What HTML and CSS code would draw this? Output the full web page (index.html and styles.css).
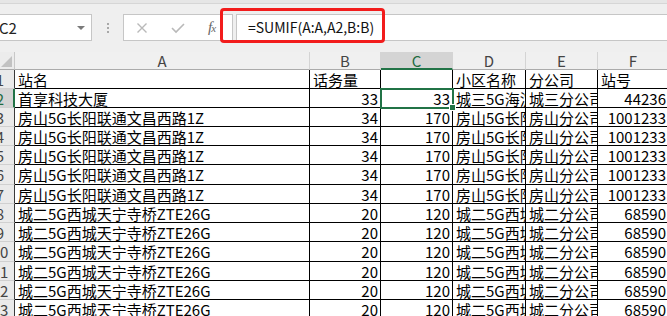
FILE: index.html
```html
<!DOCTYPE html>
<html lang="zh">
<head>
<meta charset="utf-8">
<title>Excel SUMIF</title>
<link rel="stylesheet" href="styles.css">
</head>
<body>
<div class="bar">
  <div class="band"></div>
  <div class="frow">
    <div class="namebox"><span>C2</span><i class="caret"></i></div>
    <div class="dots"><i></i><i></i><i></i></div>
    <div class="btns">
      <svg class="ic-x" width="12" height="12" viewBox="0 0 12 12"><path d="M1.5 1.5L10.5 10.5M10.5 1.5L1.5 10.5" stroke="#b9b9b9" stroke-width="1.4" fill="none"/></svg>
      <svg class="ic-ok" width="14" height="12" viewBox="0 0 14 12"><path d="M1 6L5 10L13 2" stroke="#b9b9b9" stroke-width="1.6" fill="none"/></svg>
      <span class="fx">f<span class="fxx">x</span></span>
    </div>
    <div class="fbox">=SUMIF(A:A,A2,B:B)</div>
  </div>
  <div class="redbox"></div>
</div>
<div class="sheet">
  <div class="corner"><svg width="11" height="11" viewBox="0 0 11 11"><path d="M11 0V11H0Z" fill="#c2c2c2"/></svg></div>
  <div class="ch">A</div><div class="ch">B</div><div class="ch sel">C</div><div class="ch">D</div><div class="ch">E</div><div class="ch">F</div>

  <div class="rh"><span>1</span></div><div class="c">站名</div><div class="c">话务量</div><div class="c"></div><div class="c">小区名称</div><div class="c">分公司</div><div class="c">站号</div>
  <div class="rh sel"><span>2</span></div><div class="c">首享科技大厦</div><div class="c n">33</div><div class="c n">33</div><div class="c">城三5G海淀首享科技大厦</div><div class="c">城三分公司</div><div class="c n">44236</div>
  <div class="rh"><span>3</span></div><div class="c">房山5G长阳联通文昌西路1Z</div><div class="c n">34</div><div class="c n">170</div><div class="c">房山5G长阳联通文昌西路1Z</div><div class="c">房山分公司</div><div class="c n">1001233</div>
  <div class="rh"><span>4</span></div><div class="c">房山5G长阳联通文昌西路1Z</div><div class="c n">34</div><div class="c n">170</div><div class="c">房山5G长阳联通文昌西路1Z</div><div class="c">房山分公司</div><div class="c n">1001233</div>
  <div class="rh"><span>5</span></div><div class="c">房山5G长阳联通文昌西路1Z</div><div class="c n">34</div><div class="c n">170</div><div class="c">房山5G长阳联通文昌西路1Z</div><div class="c">房山分公司</div><div class="c n">1001233</div>
  <div class="rh"><span>6</span></div><div class="c">房山5G长阳联通文昌西路1Z</div><div class="c n">34</div><div class="c n">170</div><div class="c">房山5G长阳联通文昌西路1Z</div><div class="c">房山分公司</div><div class="c n">1001233</div>
  <div class="rh"><span>7</span></div><div class="c">房山5G长阳联通文昌西路1Z</div><div class="c n">34</div><div class="c n">170</div><div class="c">房山5G长阳联通文昌西路1Z</div><div class="c">房山分公司</div><div class="c n">1001233</div>
  <div class="rh"><span>8</span></div><div class="c">城二5G西城天宁寺桥ZTE26G</div><div class="c n">20</div><div class="c n">120</div><div class="c">城二5G西城天宁寺桥ZTE26G</div><div class="c">城二分公司</div><div class="c n">68590</div>
  <div class="rh"><span>9</span></div><div class="c">城二5G西城天宁寺桥ZTE26G</div><div class="c n">20</div><div class="c n">120</div><div class="c">城二5G西城天宁寺桥ZTE26G</div><div class="c">城二分公司</div><div class="c n">68590</div>
  <div class="rh"><span>10</span></div><div class="c">城二5G西城天宁寺桥ZTE26G</div><div class="c n">20</div><div class="c n">120</div><div class="c">城二5G西城天宁寺桥ZTE26G</div><div class="c">城二分公司</div><div class="c n">68590</div>
  <div class="rh"><span>11</span></div><div class="c">城二5G西城天宁寺桥ZTE26G</div><div class="c n">20</div><div class="c n">120</div><div class="c">城二5G西城天宁寺桥ZTE26G</div><div class="c">城二分公司</div><div class="c n">68590</div>
  <div class="rh"><span>12</span></div><div class="c">城二5G西城天宁寺桥ZTE26G</div><div class="c n">20</div><div class="c n">120</div><div class="c">城二5G西城天宁寺桥ZTE26G</div><div class="c">城二分公司</div><div class="c n">68590</div>
  <div class="rh"><span>13</span></div><div class="c">城二5G西城天宁寺桥ZTE26G</div><div class="c n">20</div><div class="c n">120</div><div class="c">城二5G西城天宁寺桥ZTE26G</div><div class="c">城二分公司</div><div class="c n">68590</div>

  <div class="selbox"><i class="handle"></i></div>
</div>
</body>
</html>
```

FILE: styles.css
```css
* { box-sizing: border-box; margin: 0; padding: 0; }
html, body { width: 667px; height: 316px; overflow: hidden; }
body {
  background: #efefef;
  font-family: "Noto Sans CJK SC", "Noto Sans", sans-serif;
  color: #000;
}

.bar { position: relative; height: 52px; }
.band { height: 4px; background: #e6e6e6; border-bottom: 1px solid #d6d6d6; }
.frow { display: flex; height: 27px; margin-top: 10px; }

.namebox {
  width: 100px; margin-left: -8px;
  background: #fff; border: 1px solid #c6c6c6;
  display: flex; align-items: center; justify-content: space-between;
  padding: 0 6px 0 6px;
  font-size: 15px; color: #222;
}
.caret {
  display: block; width: 0; height: 0;
  border-left: 4px solid transparent; border-right: 4px solid transparent;
  border-top: 4px solid #7a7a7a;
}
.dots { width: 31px; display: flex; flex-direction: column; align-items: center; justify-content: center; gap: 2px; }
.dots i { display: block; width: 2px; height: 2px; background: #a8a8a8; }

.btns {
  width: 110px; background: #fff; border: 1px solid #c6c6c6;
  display: flex; align-items: center; gap: 23px; padding-left: 12px;
}
.fx {
  font-family: "Liberation Serif", serif; font-style: italic;
  font-size: 15px; color: #666; letter-spacing: -1px;
}
.fxx { font-size: 11px; }

.fbox {
  flex: 1; margin-left: 3px; margin-right: -20px;
  background: #fff; border: 1px solid #c6c6c6;
  padding-left: 11px; font-size: 14px; line-height: 25px; color: #111;
}
.redbox {
  position: absolute; left: 220px; top: 8px; width: 165px; height: 35px;
  border: 3px solid #f21c1c; border-radius: 4px;
}

.sheet {
  position: relative;
  display: grid;
  grid-template-columns: 15px 295px 71px 72px 73px 72px 71px;
  grid-template-rows: 18px 19px 19px 19px 19px 19px 20px 19px 19px 19px 20px 19px 19px 19px;
  font-size: 15px;
}
.corner {
  background: #ececec; border-right: 1px solid #c8c8c8; border-bottom: 1px solid #ababab;
  display: flex; align-items: flex-end; justify-content: flex-end; padding: 0 2px 2px 0;
}
.ch {
  background: #f0f0f0; color: #444;
  border-right: 1px solid #d4d4d4; border-bottom: 1px solid #ababab;
  text-align: center; line-height: 17px;
}
.ch.sel { background: #d4d4d4; color: #1e6b3f; border-bottom: 2px solid #217346; }

.rh {
  background: #eaeaea; color: #444; overflow: hidden;
  border-right: 1px solid #3a3a3a; border-bottom: 1px solid #d0d0d0;
  line-height: 18px; padding-top: 1px;
}
.rh span { display: block; width: 30px; margin-left: -15px; text-align: center; }
.rh.sel { background: #d4d4d4; color: #1e6b3f; border-right: 2px solid #217346; }

.c {
  background: #fff; white-space: nowrap; overflow: hidden;
  border-right: 1px solid #000; border-bottom: 1px solid #000;
  padding: 1px 2px 0 3px; line-height: 18px;
}
.n { text-align: right; padding: 1px 2px 0 2px; }

.selbox {
  position: absolute; left: 380px; top: 36px; width: 74px; height: 21px;
  border: 2px solid #217346;
}
.handle {
  position: absolute; right: -4px; bottom: -4px; width: 7px; height: 7px;
  background: #217346; border: 1px solid #fff;
}
```
